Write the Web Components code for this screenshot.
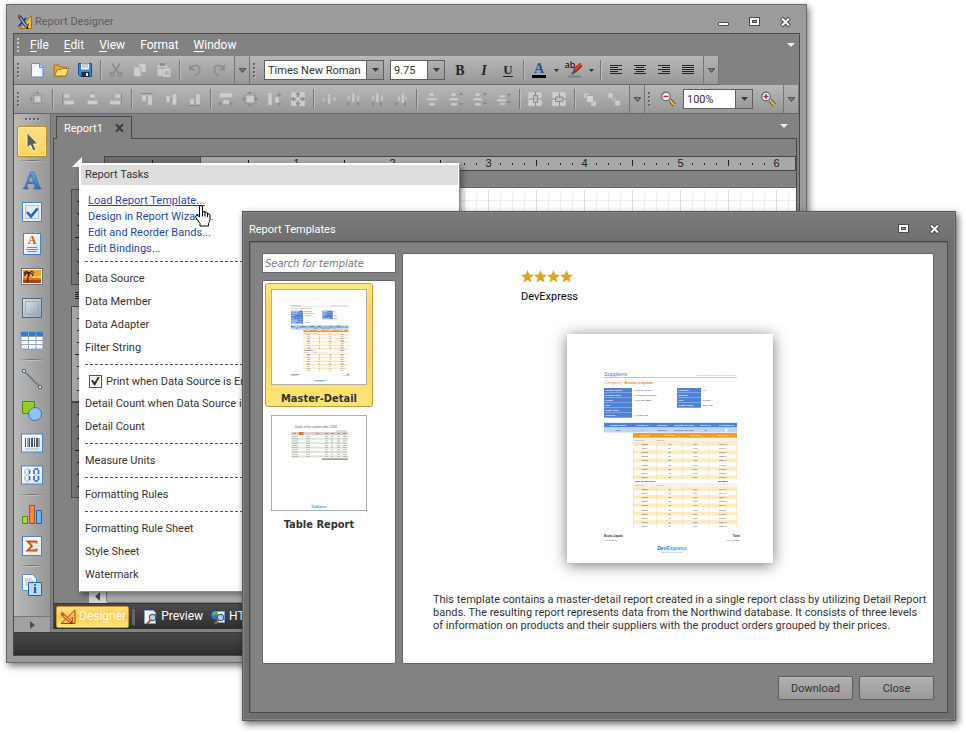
<!DOCTYPE html>
<html lang="en">
<head>
<meta charset="utf-8">
<title>Report Designer</title>
<style>
  html, body { margin: 0; height: 100%; background: #fff; overflow: hidden; }
  body { font-family: Roboto, "Noto Sans", sans-serif; font-size: 11px; line-height: 13px; color: #333; }
</style>
</head>
<body>
<desktop-view>
  <designer-window></designer-window>
  <templates-dialog></templates-dialog>
</desktop-view>

<script>
const define = (name, html, init) => {
  const t = document.createElement('template');
  t.innerHTML = `<style>*,*::before,*::after{box-sizing:border-box}button{font:inherit;color:inherit;background:none;border:0;padding:0;margin:0}</style>` + html;
  customElements.define(name, class extends HTMLElement {
    constructor() {
      super();
      this.attachShadow({ mode: 'open' }).append(t.content.cloneNode(true));
    }
    connectedCallback() { if (init && !this.ready) { this.ready = true; init(this, this.shadowRoot); } }
  });
};

/* ---------- icon library: 16x16 toolbar glyphs ---------- */
const lt = (...a) => a.map(([x, y, w, h]) => `<rect x="${x}" y="${y}" width="${w}" height="${h}" fill="#cdcdcd" stroke="#adadad" stroke-width=".5"/>`).join('');
const dk = (...a) => a.map(([x, y, w, h]) => `<rect x="${x}" y="${y}" width="${w}" height="${h}" fill="#8b8b8b"/>`).join('');
const line = (d, c = '#8b8b8b', w = 1) => `<path d="${d}" fill="none" stroke="${c}" stroke-width="${w}"/>`;
const fill = (d, c = '#8b8b8b') => `<path d="${d}" fill="${c}"/>`;
const aL = (x, y) => fill(`M${x} ${y}l3 -2.5v5z`), aR = (x, y) => fill(`M${x} ${y}l-3 -2.5v5z`);
const aU = (x, y) => fill(`M${x} ${y}l-2.5 3h5z`), aD = (x, y) => fill(`M${x} ${y}l-2.5 -3h5z`);
const bars = c => c.map(([x, w], i) => `<rect x="${x}" y="${3 + i * 2}" width="${w}" height="1" fill="#222"/>`).join('');
const lens = s => line('M10 9.500L14.500 14', '#6b5320', 4) + line('M10 9.500L14.500 14', '#e2b650', 2.2) +
  `<circle cx="6" cy="5.500" r="4.300" fill="#e9eef5" stroke="#5a6a7c" stroke-width="1.200"/>` + s;
const ICONS = {
  'new': `<path d="M2.500 1.500h8l3.500 3.500v10h-11.500z" fill="#edf4fd" stroke="#5b8fcb"/><path d="M4 8L10 3v11H4z" fill="#fff"/><path d="M10.500 1.500v4h3.500" fill="#bcd7f5" stroke="#5b8fcb"/>`,
  open: `<path d="M1 3h5l1.500 2h6v9H1z" fill="#e9a32f" stroke="#9a6513" stroke-width=".8"/><path d="M1.500 14L4.500 7.500h4l1-1h6L13 14z" fill="#ffdf70" stroke="#a56c12" stroke-width=".9"/>`,
  save: `<path d="M1.500 1.500h13v13h-11l-2-2z" fill="#3c84d8" stroke="#1d4c8d"/><path d="M4 1.500h8v6H4z" fill="#f4f6f9"/><path d="M5 3h6M5 5h6" stroke="#9aa"/><path d="M4.500 10h8v5h-8z" fill="#252b35"/><path d="M9 11h2v3H9z" fill="#eee"/>`,
  cut: line('M4 1.500L10.500 11M12 1.500L5.500 11', '#8d8d8d', 1.600) + `<g fill="none" stroke="#8d8d8d" stroke-width="1.500"><circle cx="4" cy="12.500" r="1.900"/><circle cx="12" cy="12.500" r="1.900"/></g>`,
  copy: lt([7, 1.500, 7, 9]) + lt([2, 5, 7, 9.500]) + line('M2 14.500h7v-9M14 10.500h-4', '#aaa'),
  paste: lt([1.500, 3, 10, 11]) + fill('M4 1h5v3H4z', '#909090') + line('M3 6h7', '#999') + lt([7, 6, 7.500, 9]) + line('M9 10h4M9 12h4', '#999'),
  undo: line('M4 5.500C8 2 13 3 12.500 8.500C12.300 11 10.500 13 8 14', '#909090', 2) + fill('M2 2v6.500h6.500z', '#909090'),
  redo: line('M12 5.500C8 2 3 3 3.500 8.500C3.700 11 5.500 13 8 14', '#909090', 2) + fill('M14 2v6.500h-6.500z', '#909090'),
  grid: line('M4.500 1v14M12.500 1v14M1 4.500h14M1 12.500h14', '#979797', .8) + lt([5.500, 5, 6, 6]) + aU(8.500, 0) + aL(0, 8),
  alL: dk([2, 2, 1, 12]) + lt([4, 3, 5.500, 4], [4, 9.500, 10, 4]),
  alC: dk([8, 1, 1, 14]) + lt([6, 3, 5, 4], [3.500, 9.500, 10, 4]),
  alR: dk([13, 2, 1, 12]) + lt([7, 3, 5.500, 4], [2, 9.500, 10.500, 4]),
  alT: dk([1, 2, 13, 1]) + lt([3, 4, 4, 6], [9, 4, 4, 10]),
  alM: dk([1, 8, 14, 1]) + lt([3, 5, 4, 6], [9.500, 3, 4, 11]),
  alB: dk([1, 14, 13, 1]) + lt([3, 8, 4, 5.500], [9, 3, 4, 10.500]),
  szW: lt([1.500, 2, 13, 4.500], [5, 9, 6, 4]) + aL(0, 13) + aR(15, 13),
  szG: line('M4.500 1v14M12.500 1v14M1 4.500h14M1 12.500h14', '#979797', .8) + lt([4.500, 4.500, 7.500, 7]) + aL(0, 8) + aR(16, 8) + aU(8, 0) + aD(8, 16),
  szH: lt([2, 2, 4, 12], [9, 6, 4, 6]) + aU(13, 2) + aD(13, 15),
  szB: lt([1, 1, 6, 6], [9, 1, 6, 6], [1, 9, 6, 6], [9, 9, 6, 6]) + line('M8 2v12M2 8h12') + lt([6, 6, 4, 4]) + aU(8, 1) + aD(8, 15) + aL(1, 8) + aR(15, 8),
  spE: lt([1.500, 7, 2, 3], [7, 3, 2.500, 10], [12.500, 6, 2, 4]),
  spI: lt([3, 5, 2, 4], [7, 2, 2.500, 9], [12, 4, 2, 6]) + aL(1, 13) + aR(15, 13),
  spD: lt([3, 5, 2, 4], [7, 2, 2.500, 9], [12, 4, 2, 6]) + aR(6, 13) + aL(10, 13),
  spR: lt([5, 5, 2, 5], [8.500, 2, 2.500, 10], [12, 5, 1.500, 5]) + aR(5, 13) + aL(10, 13),
  svE: lt([5, 2, 5, 3], [3, 7, 10, 2.500], [5, 12, 6, 2.500]),
  svI: lt([3, 2, 5, 3], [1, 7, 9, 2.500], [3, 12, 6, 2.500]) + aU(13, 1) + aD(13, 15),
  svD: lt([3, 2, 5, 3], [1, 7, 9, 2.500], [3, 12, 6, 2.500]) + aD(13, 5) + aU(13, 10),
  svR: lt([3, 4, 6, 2.500], [1, 8, 9, 2.500], [4, 12, 5, 2]) + aD(13, 6) + aU(13, 9),
  ceH: lt([1, 1, 14, 14]) + `<path d="M6.500 4.500h4v7h-4zM2 8h4M11 8h4M8.500 1v3M8.500 12v3" fill="#bdbdbd" stroke="#8b8b8b"/>`,
  ceV: lt([1, 1, 14, 14]) + `<path d="M4.500 6h7.500v4.500H4.500zM8.500 2v4M8.500 11v4M1 8h3M12 8h3" fill="#bdbdbd" stroke="#8b8b8b"/>`,
  fwd: lt([2, 2, 5, 5], [9, 10, 5, 5]) + `<rect x="4.500" y="4.500" width="7" height="7" fill="#d2d2d2" stroke="#999" stroke-width=".6"/>`,
  bck: `<rect x="5" y="5" width="6" height="6" fill="#b4b4b4" stroke="#999" stroke-width=".6"/>` + lt([2, 2, 5, 5], [9, 9.500, 5, 5]),
  bold: '<text x="8" y="13" text-anchor="middle" font-family="Liberation Serif, serif" font-weight="700" font-size="14" fill="#262626">B</text>',
  italic: '<text x="8" y="13" text-anchor="middle" font-family="Liberation Serif, serif" font-weight="700" font-style="italic" font-size="14" fill="#262626">I</text>',
  under: '<text x="8" y="12" text-anchor="middle" font-family="Liberation Serif, serif" font-weight="700" font-size="13" fill="#262626">U</text><path d="M3 14h10v1H3z" fill="#262626"/>',
  color: '<text x="8" y="11" text-anchor="middle" font-family="Liberation Serif, serif" font-weight="700" font-size="14" fill="#1f5599">A</text><path d="M1 13h14v3H1z" fill="#050505"/>',
  hilite: line('M15 2.500L8.500 9', '#8a1212', 4) + line('M15 2L8.500 8.500', '#e23a2e', 2.500) + fill('M8.500 7l2.500 2.500l-5 3.500l-1-1z', '#4a5564') + fill('M2 13.500h13v2H2z', '#7d7d7d') + `<text x="4" y="6" text-anchor="middle" font-family="Noto Sans, sans-serif" font-size="9" fill="#000">ab</text>`,
  jL: bars([[2, 12], [2, 8], [2, 12], [2, 8], [2, 12]]), jC: bars([[2, 12], [4, 8], [2, 12], [4, 8], [2, 12]]),
  jR: bars([[2, 12], [6, 8], [2, 12], [6, 8], [2, 12]]), jJ: bars([[2, 12], [2, 12], [2, 12], [2, 12], [2, 12]]),
  zoomOut: lens(line('M3.500 5.500h5', '#c22b2b', 1.500)),
  zoomIn: lens(line('M3.500 5.500h5M6 3v5', '#c22b2b', 1.500))
};

/* ---------- icon library: 24x24 toolbox glyphs ---------- */
const G = `<defs><linearGradient id="b" x2="0" y2="1"><stop stop-color="#7fb4f0"/><stop offset="1" stop-color="#1e62b8"/></linearGradient>
<linearGradient id="w" x2="1" y2="1"><stop stop-color="#fff"/><stop offset="1" stop-color="#dfe6ee"/></linearGradient>
<linearGradient id="s" x2="1" y2="1"><stop stop-color="#dde3ea"/><stop offset="1" stop-color="#97a4b3"/></linearGradient></defs>`;
const card = (w, h) => `<rect x="${12 - w / 2}" y="${12 - h / 2}" width="${w}" height="${h}" fill="url(#w)" stroke="#4584cb"/>`;
const digit = (x, on) => ['M.5 0h3.500', 'M0 .800v4.200', 'M4.500 .800v4.200', 'M.5 6h3.500', 'M0 7v4.200', 'M4.500 7v4.200', 'M.5 12h3.500']
  .map((d, i) => `<path transform="translate(${x} 6)" d="${d}" stroke="${on.includes(i) ? '#1c6fd0' : '#b9c2cc'}" stroke-width="1.600" fill="none"/>`).join('');
const BOX = {
  pointer: '<path d="M7 2.500v15.500l3.500-3 2.500 6 3-1.300-2.500-5.700h4.500z" fill="#565e69" stroke="#fff3b8" stroke-width="1"/>',
  label: '<text x="12" y="21" text-anchor="middle" font-family="Liberation Serif, serif" font-size="25" font-weight="700" fill="url(#b)" stroke="#1d58a4" stroke-width=".5">A</text>',
  check: card(19, 19) + '<rect x="5.500" y="5.500" width="13" height="13" fill="#e6ecf4" stroke="#b3c3d5"/><path d="M7 12l4 4.500 6.500-8" fill="none" stroke="#1d63bd" stroke-width="2.500"/>',
  rich: card(17, 21) + '<text x="12" y="12" text-anchor="middle" font-family="Liberation Serif, serif" font-size="12" font-weight="700" fill="#d65514">A</text><path d="M7 15.500h10M6 17.500h12M7.500 19.500h9" stroke="#7689a0"/>',
  picture: '<rect x="1.500" y="4.500" width="21" height="16" fill="#fff" stroke="#4c4c4c" stroke-width=".7"/><path d="M3 6h18v13H3z" fill="#f7a02a"/><path d="M3 15.500h18V19H3z" fill="#a8420e"/><path d="M3 14h18v1.500H3z" fill="#e2731a"/><path d="M13 12h8v2h-8z" fill="#ffdc58"/><path d="M7.500 18l1-9" stroke="#451705" stroke-width="1.200"/><path d="M9 9q-3-3-5 .500M9 9q-4-.500-4.500 3M9 9q3-3 5 0M9 9q4 0 4 3M9 9l0 3.500" stroke="#451705" stroke-width="1.200" fill="none"/>',
  panel: '<rect x="2.500" y="2.500" width="19" height="19" fill="url(#s)" stroke="#55677c"/><rect x="5.500" y="5.500" width="13" height="13" fill="url(#s)" stroke="#9aa8b8"/>',
  table: '<rect x="1" y="4" width="22" height="17" fill="#fff" stroke="#8496ab"/><path d="M1 4h22v4.500H1z" fill="#2f7cd6"/><path d="M1 8.500h22M1 12.500h22M1 16.500h22M8.500 4v17M16 4v17" stroke="#8fa3bb"/>',
  wire: '<path d="M4 4l16 16" stroke="#66727f" stroke-width="1.500"/><path d="M2.500 2.500h3v3h-3zM18.500 18.500h3v3h-3z" fill="#d8e4f0" stroke="#4c6580"/>',
  shape: '<path d="M2.500 2.500h12v12h-12z" fill="#93d01e" stroke="#4f8509"/><circle cx="15" cy="15" r="6.500" fill="#93c2f5" stroke="#3476c4"/>',
  barcode: card(21, 18) + '<path d="M5.500 7v9M8 7v9M9.500 7v9M14.500 7v9M19 7v9" stroke="#4c5866"/><path d="M12 7v9M17 7v9" stroke="#4c5866" stroke-width="2"/><path d="M5 18h14" stroke="#a8b4c2"/>',
  zip: card(21, 18) + digit(5, [2, 5]) + digit(14, [0, 1, 2, 4, 5, 6]),
  chart: '<path d="M2.500 14.500h5v7h-5z" fill="#a6dc3a" stroke="#4f8509"/><path d="M9.500 3.500h5v18h-5z" fill="#f48b3c" stroke="#b64b0b"/><path d="M16.500 8.500h5v13h-5z" fill="#6fb1f6" stroke="#1e62b8"/>',
  sum: card(19, 19) + '<path d="M16.500 9.500V7.500H7.500L12 12l-4.500 4.500h9v-2" fill="none" stroke="#d4500f" stroke-width="1.800"/>',
  info: '<path d="M2.500 1.500h10l4 4v12h-14z" fill="#fff" stroke="#5b8fcb"/><path d="M5 6h7M5 8h9M5 10h5M5 12h4" stroke="#9fb4cb"/><path d="M8.500 9.500h13v13h-13z" fill="#b9dafb" stroke="#1f63b2"/><text x="15" y="20" text-anchor="middle" font-family="Liberation Serif, serif" font-weight="700" font-size="12" fill="#12468c">i</text>'
};

define('desktop-view', `<style>:host{display:block;position:relative;height:100vh;min-height:400px;overflow:hidden}</style><slot></slot>`);

/* ---------- toolbars ---------- */
define('tool-icon', `<style>
:host{display:block;width:24px;height:24px}
button{width:24px;height:24px;display:grid;place-items:center}
svg{overflow:visible}
</style><button type="button"></button>`, (el, r) => {
  const n = el.getAttribute('name'), b = r.querySelector('button');
  b.setAttribute('aria-label', n);
  if (el.hasAttribute('off')) b.disabled = true;
  b.innerHTML = `<svg width="16" height="16" viewBox="0 0 16 16">${ICONS[n]}</svg>`;
});
define('tool-sep', `<style>:host{display:flex;width:7px;height:20px;justify-content:center}i{width:2px;border-left:1px solid #767676;border-right:1px solid #bdbdbd}</style><i></i>`);
define('tool-arrow', `<style>:host{display:block;width:11px}button{width:11px;height:24px;display:grid;place-items:center}</style><button type="button" aria-label="More"><svg width="5" height="3"><path d="M0 0h5L2.500 3z" fill="#333"/></svg></button>`);
define('tool-end', `<style>
:host{display:block;align-self:stretch;width:16px;margin-left:3px;border-left:1px solid #767676;border-right:1px solid #767676;background:linear-gradient(#b3b3b3,#999)}
button{width:100%;height:100%;display:grid;place-items:center}
</style><button type="button" aria-label="Toolbar options"><svg width="7" height="5"><path d="M0 0h7v1L3.500 5L0 1z" fill="#555"/><path d="M1.500 1h4L3.500 3.300z" fill="#888"/></svg></button>`);
define('tool-bar', `<style>
:host{display:flex;align-items:center;height:29px;background:linear-gradient(#b8b8b8,#979797);border-bottom:1px solid #686868}
.grip{width:11px;display:grid;gap:2px;padding-left:3px}
.grip i{width:2px;height:2px;background:#666;box-shadow:1px 1px #bbb}
</style><span class="grip"><i></i><i></i><i></i><i></i></span><slot></slot>`);
define('tool-combo', `<style>
:host{display:grid;height:20px;margin-right:6px}
select,span{grid-area:1/1}
select{appearance:none;width:100%;border:1px solid #5f5f5f;border-radius:0;background:#fff;color:#333;font:inherit;padding:0 20px 0 3px;outline:0}
span{justify-self:end;width:17px;margin:1px;border-left:1px solid #5f5f5f;background:linear-gradient(#b0b0b0,#9a9a9a);display:grid;place-items:center;pointer-events:none}
</style><select></select><span><svg width="7" height="4"><path d="M0 0h7L3.500 4z" fill="#3c3c3c"/></svg></span>`, (el, r) => {
  const s = r.querySelector('select');
  s.setAttribute('aria-label', el.getAttribute('label'));
  s.append(new Option(el.getAttribute('value')));
});

/* ---------- toolbox ---------- */
define('tool-box', `<style>
:host{display:flex;flex-direction:column;align-items:center;width:37px;background:linear-gradient(90deg,#bababa,#969696);border-right:1px solid #6e6e6e}
.grip{display:flex;gap:2px;margin:4px 0 6px}
.grip i{width:2px;height:2px;background:#666;box-shadow:1px 1px #bbb}
button{width:30px;height:32px;display:grid;place-items:center;flex:none}
button.on{height:31px;background:linear-gradient(#ffdf80,#ffd45e);border:1px solid #b98d2c;border-radius:2px;box-shadow:inset 0 0 0 1px #ffe9a5}
svg{overflow:visible}
hr{width:26px;height:7px;margin:0;border:0;flex:none;background:linear-gradient(90deg,#0000,#6b6b6b,#0000) 0 3px/100% 1px no-repeat,linear-gradient(90deg,#0000,#c5c5c5,#0000) 0 4px/100% 1px no-repeat}
button.more{margin-top:auto;width:100%;height:16px;border-top:1px solid #777;background:#a2a2a2}
</style><span class="grip"><i></i><i></i><i></i><i></i></span>`, (el, r) => {
  'pointer - label check rich picture panel table - wire shape barcode zip - chart sum - info'.split(' ').forEach(n => {
    if (n === '-') return r.append(document.createElement('hr'));
    const b = document.createElement('button');
    b.type = 'button'; b.setAttribute('aria-label', n);
    if (n === 'pointer') b.className = 'on';
    b.innerHTML = `<svg width="24" height="24" viewBox="0 0 24 24">${G}${BOX[n]}</svg>`;
    r.append(b);
  });
  r.append(Object.assign(document.createElement('button'), { className: 'more', type: 'button', ariaLabel: 'More tools',
    innerHTML: '<svg width="5" height="8"><path d="M0 0l5 4l-5 4z" fill="#505050"/></svg>' }));
});

/* ---------- rulers ---------- */
define('horizontal-ruler', `<style>
:host{display:block;min-width:0;height:15px;border:1px solid #484848;background:linear-gradient(90deg,#6d6d6d 95px,#484848 95px,#484848 96px,#a8a8a8 96px);overflow:hidden}
svg{display:block;width:100%;height:13px;overflow:hidden}
text{font:11px "Liberation Sans",Arial,sans-serif;fill:#222}
</style><svg></svg>`, (el, r) => {
  const draw = () => {
    let s = '';
    for (let i = 1; i * 12 + 6 < el.clientWidth; i++) {
      const x = i * 12 - 1;
      if (i % 8 === 0) { const n = Math.abs(i / 8 - 1); if (n) s += `<text x="${x + .5}" y="10" text-anchor="middle">${n}</text>`; }
      else s += i % 4 === 0 ? `<rect x="${x}" y="3" width="1" height="6" fill="#222"/>` : `<rect x="${x}" y="6" width="1" height="2" fill="#222"/>`;
    }
    r.querySelector('svg').innerHTML = s;
  };
  new ResizeObserver(draw).observe(el);
});
define('vertical-ruler', `<style>
:host{display:block}
div{width:15px;height:96px;border:1px solid #484848;background:#757575}
div.lit{background:#a6a6a6}
p{margin:7px 0 6px 4px;width:8px;height:8px;background:repeating-linear-gradient(#222 0 1px,#0000 1px 2px)}
i{display:block;width:2px;height:1px;margin:11px 0 0 5px;background:#222}
i.half{width:4px;margin-left:3px}
</style><div></div><p></p><div class="lit"></div><div></div>`, (el, r) => {
  r.querySelectorAll('div').forEach(d => { for (let i = 1; i < 8; i++) { const t = document.createElement('i'); if (i === 4) t.className = 'half'; d.append(t); } });
});

/* ---------- smart-tag task panel ---------- */
define('task-panel', `<style>
:host{display:block;background:#fff;border:1px solid #8c8c8c;border-top-color:#fff;border-left-color:#fff;padding:1px 1px 0;box-shadow:2px 3px 6px #0007}
h2{margin:0;font:inherit;background:#dedede;height:20px;line-height:20px;padding-left:4px;color:#333}
nav{padding:8px 7px 4px}
nav a{display:block;line-height:16px;color:#1d49a5;text-decoration:none;width:max-content}
nav a.hot{text-decoration:underline}
hr{border:0;height:1px;margin:0 4px 5px;background:repeating-linear-gradient(90deg,#555 0 3px,#0000 3px 5px)}
button{display:block;text-align:left;height:23px;padding-left:4px;white-space:nowrap}
section{padding-bottom:5px}
label{display:flex;align-items:center;gap:4px;height:22px;padding-left:8px;white-space:nowrap}
input{appearance:none;width:13px;height:13px;margin:0;border:1px solid #555;background:#efefef;box-shadow:inset 0 0 0 1px #fff;display:grid;place-items:center}
input:checked::before{content:"";width:9px;height:9px;background:#333;clip-path:polygon(0 45%,20% 38%,40% 65%,78% 0,100% 0,45% 100%,35% 100%)}
</style>
<h2>Report Tasks</h2>
<nav><a class="hot" href="#load">Load Report Template...</a><a href="#wizard">Design in Report Wizard...</a><a href="#bands">Edit and Reorder Bands...</a><a href="#bindings">Edit Bindings...</a></nav>
<hr><section><button>Data Source</button><button>Data Member</button><button>Data Adapter</button><button>Filter String</button></section>
<hr><section><label><input type="checkbox" checked>Print when Data Source is Empty</label><button>Detail Count when Data Source is Empty</button><button>Detail Count</button></section>
<hr><section><button>Measure Units</button></section>
<hr><section><button>Formatting Rules</button></section>
<hr><section><button>Formatting Rule Sheet</button><button>Style Sheet</button><button>Watermark</button></section>`);

/* ---------- window caption buttons ---------- */
define('caption-buttons', `<style>
:host{display:flex;gap:19px}
button{width:12px;height:12px;display:block}
svg{display:block}
</style>`, (el, r) => {
  const k = {
    min: '<rect x=".5" y="6.500" width="10" height="3" rx=".5" fill="#fff" stroke="#4b4b4b"/>',
    max: '<rect x=".5" y="1.500" width="10" height="8" fill="#fff" stroke="#4b4b4b"/><rect x="3.500" y="4.500" width="4" height="2" fill="#999" stroke="#4b4b4b"/>',
    close: '<path d="M1.500 2l8 8M9.500 2l-8 8" stroke="#4b4b4b" stroke-width="4"/><path d="M2 2.500l7 7M9 2.500l-7 7" stroke="#fff" stroke-width="2"/>'
  };
  el.getAttribute('show').split(' ').forEach(n => r.append(Object.assign(document.createElement('button'), { type: 'button', ariaLabel: n, innerHTML: `<svg width="12" height="12">${k[n]}</svg>` })));
});

/* ---------- bottom view tabs ---------- */
define('view-tab', `<style>
:host{display:block}
button{display:flex;align-items:center;gap:3px;height:22px;padding:0 2px 0 3px;color:#fff;font-size:12px;white-space:nowrap;border:1px solid #0000;border-radius:2px}
:host([on]) button{background:linear-gradient(#ffe07c,#ffcb55 50%,#ffe777);border-color:#c7952f;color:#fffbe8}
</style><button type="button"><svg width="16" height="16" viewBox="0 0 16 16"></svg><slot></slot></button>`, (el, r) => {
  const mag = '<circle cx="10.500" cy="8.500" r="3.200" fill="#b5d2ef" stroke="#3d5f86" stroke-width="1.200"/><path d="M8.500 11l-3.500 4" stroke="#b0612a" stroke-width="2.200"/>';
  const art = {
    design: '<path d="M1 14.500h14V1z" fill="#ffbf4d" stroke="#a44d08"/><path d="M8.500 12h4V8z" fill="#ffe07c" stroke="#a44d08" stroke-width=".8"/><path d="M2 5l10 9" stroke="#7a1e10" stroke-width="3"/><path d="M2 5l9 8" stroke="#ff9c52" stroke-width="1.800"/><path d="M1.500 3.500l2.500 3" stroke="#d64a6a" stroke-width="2.500"/>',
    preview: '<path d="M2.500 1.500h9l2 2v11h-11z" fill="#fff" stroke="#7ea4cf"/>' + mag,
    html: '<circle cx="5.500" cy="6" r="4.800" fill="#2d74c6" stroke="#194a88"/><path d="M3 3q3-2 4 0t-2 3q-2 2-3-1z" fill="#5fb53c"/><path d="M7.500 2.500h7v11h-7z" fill="#fff" stroke="#7ea4cf"/>' + mag
  };
  r.querySelector('svg').innerHTML = art[el.getAttribute('icon')];
});

/* ---------- main designer window ---------- */
define('designer-window', `<style>
:host{position:absolute;inset:4px 159px 70px 6px;display:flex;flex-direction:column;border:1px solid #6a6a6a;background:#9c9c9c;padding:0 6px 6px;box-shadow:2px 3px 7px #0008}
header{display:flex;align-items:center;height:28px;padding:5px 8px 0 4px;color:#5c5c5c}
header h1{font:inherit;margin:0 auto 0 2px}
.client{flex:1;min-height:0;display:flex;flex-direction:column;border:1px solid #4a4a4a;background:#828282}
.menu{display:flex;align-items:center;height:22px;color:#fff;font-size:12px;padding-right:4px}
.menu .grip{width:9px;display:grid;gap:2px;padding-left:3px}
.menu .grip i{width:2px;height:2px;background:#ccc}
.menu nav{display:flex;gap:15px;margin:0 auto 0 7px}
u{text-underline-offset:2px}
.row{display:flex}
.row .zoom{flex:1}
.body{flex:1;min-height:0;display:flex;gap:2px}
.doc{flex:1;min-width:0;display:flex;flex-direction:column;padding:2px 2px 3px 0}
.tabs{display:flex;align-items:flex-end;height:22px;padding:0 9px 0 3px;justify-content:space-between}
.tab{display:flex;align-items:center;gap:12px;width:76px;height:23px;border:1px solid #484848;border-bottom:0;background:#828282;margin-bottom:-1px;padding-left:7px;z-index:1;color:#fff}
.tabs>svg{margin-bottom:10px}
.surface{position:relative;flex:1;min-height:0;display:flex;flex-direction:column;border:1px solid #484848;border-bottom:0}
.design{flex:1;min-height:0;display:grid;grid-template:15px 1fr/33px 1fr;row-gap:17px;padding:17px 0 0 17px;overflow:hidden}
.corner{display:block}
.page{background:
 linear-gradient(90deg,#dcdcdc 1px,#0000 1px) 0 0/48px 48px,
 linear-gradient(90deg,#efefef 1px,#0000 1px) 0 0/12px 12px,
 linear-gradient(#efefef 1px,#0000 1px) 0 0/12px 12px,#fff;box-shadow:0 -1px #666,inset 0 2px #fff}
vertical-ruler{margin-top:1px}
.scroll{display:flex;height:12px;margin-left:35px;background:#d4d4d4}
.scroll svg{margin:1px 6px 0 6px}
.scroll i{flex:1;border:1px solid #808080;background:linear-gradient(#c4c4c4,#a6a6a6);border-radius:2px}
.views{display:flex;align-items:center;height:26px;background:linear-gradient(#4b4b4b,#2e2e2e);border-top:1px solid #333;padding-left:2px}
.views .bar{width:3px;height:16px;margin:0 3px;background:#666}
task-panel{position:absolute;left:25px;top:24px;width:381px;z-index:2}
footer{height:23px;background:linear-gradient(#494949,#2e2e2e);border-top:1px solid #3b3b3b}
</style>
<header><svg width="16" height="16" viewBox="0 0 16 16"><path d="M3 14.500L14.500 1.500v13z" fill="#ffc31f" stroke="#a4650a" stroke-width=".9"/><path d="M9 11.800L12 8.500v3.300z" fill="#b0781e"/><path d="M9 4L1.500 12.500" stroke="#27313f" stroke-width="1.400"/><path d="M2.500 2.500l7 10" stroke="#12306e" stroke-width="3.600"/><path d="M3 3.500l6.500 9" stroke="#7db2ff" stroke-width="1.600"/><path d="M1.500 1l2 2.500" stroke="#c03020" stroke-width="2.400"/><path d="M8.500 13.500l2.500-1.500.3 3.500z" fill="#111"/></svg><h1>Report Designer</h1><caption-buttons show="min max close"></caption-buttons></header>
<div class="client">
  <div class="menu"><span class="grip"><i></i><i></i><i></i><i></i></span><nav><button><u>F</u>ile</button><button><u>E</u>dit</button><button><u>V</u>iew</button><button>Fo<u>r</u>mat</button><button><u>W</u>indow</button></nav><svg width="8" height="4"><path d="M0 0h8L4 4z" fill="#eee"/></svg></div>
  <div class="row">
    <tool-bar><tool-icon name="new"></tool-icon><tool-icon name="open"></tool-icon><tool-icon name="save"></tool-icon><tool-sep></tool-sep><tool-icon name="cut" off></tool-icon><tool-icon name="copy" off></tool-icon><tool-icon name="paste" off></tool-icon><tool-sep></tool-sep><tool-icon name="undo" off></tool-icon><tool-icon name="redo" off></tool-icon><tool-end></tool-end></tool-bar>
    <tool-bar><tool-combo style="width:120px;margin-left:3px" label="Font" value="Times New Roman"></tool-combo><tool-combo style="width:55px;margin-right:3px" label="Font size" value="9.75"></tool-combo><tool-icon name="bold"></tool-icon><tool-icon name="italic"></tool-icon><tool-icon name="under"></tool-icon><tool-sep></tool-sep><tool-icon name="color"></tool-icon><tool-arrow></tool-arrow><tool-icon name="hilite"></tool-icon><tool-arrow></tool-arrow><tool-sep></tool-sep><tool-icon name="jL"></tool-icon><tool-icon name="jC"></tool-icon><tool-icon name="jR"></tool-icon><tool-icon name="jJ"></tool-icon><tool-end></tool-end></tool-bar>
  </div>
  <div class="row">
    <tool-bar class="layout"></tool-bar>
    <tool-bar class="zoom"><tool-icon name="zoomOut"></tool-icon><tool-combo style="width:70px;margin:0 3px" label="Zoom" value="100%"></tool-combo><tool-icon name="zoomIn"></tool-icon><tool-end style="margin-left:auto"></tool-end></tool-bar>
  </div>
  <div class="body">
    <tool-box></tool-box>
    <div class="doc">
      <div class="tabs"><div class="tab"><span>Report1</span><svg width="9" height="8"><path d="M1 0l7 8M8 0L1 8" stroke="#3c3c3c" stroke-width="2"/></svg></div><svg width="8" height="4"><path d="M0 0h8L4 4z" fill="#eee"/></svg></div>
      <div class="surface">
        <div class="design"><svg class="corner" width="12" height="12"><path d="M1 11L11 1v10z" fill="#fff"/></svg><horizontal-ruler></horizontal-ruler><vertical-ruler></vertical-ruler><div class="page"></div></div>
        <div class="scroll"><svg width="5" height="9"><path d="M5 0v9L0 4.500z" fill="#4a4a4a"/></svg><i></i></div>
        <div class="views"><view-tab on icon="design">Designer</view-tab><span class="bar"></span><view-tab icon="preview">Preview</view-tab><view-tab icon="html">HTML View</view-tab></div>
        <task-panel></task-panel>
      </div>
    </div>
  </div>
  <footer></footer>
</div>`, (el, r) => {
  r.querySelector('.layout').innerHTML = 'grid - alL alC alR - alT alM alB - szW szG szH szB - spE spI spD spR - svE svI svD svR - ceH ceV - fwd bck'.split(' ')
    .map(n => n === '-' ? '<tool-sep></tool-sep>' : `<tool-icon name="${n}" off></tool-icon>`).join('') + '<tool-end></tool-end>';
});

/* ---------- report page drawings ---------- */
define('report-page', `<style>
:host{display:block;background:#fff}
svg{display:block;width:100%;height:100%}
text{font-family:"Liberation Sans",Arial,sans-serif}
</style>`, (el, r) => {
  const R = (x, y, w, h, c) => `<rect x="${x}" y="${y}" width="${w}" height="${h}" fill="${c}"/>`;
  const T = (x, y, s, c, t, a = 'start', b = 400) => t === '' ? '' : `<text x="${x}" y="${y}" font-size="${s}" fill="${c}" text-anchor="${a}" font-weight="${b}">${t}</text>`;
  let s = '';
  if (el.getAttribute('kind') === 'orders') {
    s += T(44, 12, 2.6, '#555', 'Details of the customer order: 10248', 'middle');
    s += R(19, 16, 57, 3.5, '#dccfc9') + R(27, 16, 4.500, 3, '#d87a2a') + R(64, 14.5, 11, 1, '#a9bbe0');
    for (let i = 0; i < 10; i++) {
      s += R(19, 19.5 + i * 2.2, 57, 2.2, i % 2 ? '#dfe7da' : '#fbfcfa');
      [[20, 6], [34, 4], [53, 3], [59, 2], [65, 3], [71, 4]].forEach(([x, w]) => s += R(x, 20.2 + i * 2.2, w, .7, '#a5aba2'));
    }
    [22, 45, 54, 60, 66, 72].forEach(x => s += R(x - 1, 17.3, 3, .8, '#888'));
    s += R(50, 42.5, 26, 1.2, '#777') + T(47, 91.500, 2.6, '#1d9ad6', 'DevExpress', 'middle', 700);
    r.innerHTML += `<svg viewBox="0 0 94 94">${s}</svg>`;
    return;
  }
  s += T(37, 42, 5.5, '#4c79c8', 'Suppliers') + R(37, 43.2, 133, .7, '#8fb0e6') + T(169, 42, 2.2, '#7f9fd8', 'Current Date: Tuesday, 27 of March 2012', 'end');
  s += T(37, 50, 4.2, '#f2902f', 'Company') + T(57.500, 50, 4.2, '#ef7d12', 'Exotic Liquids', 'start', 700);
  ['Contact Name:', 'Contact Title:', 'Phone:', 'Fax:', 'Home Page:', 'Address:'].forEach((t, i) => s += R(37, 54 + i * 5, 28, 4.7, '#4f81d6') + T(38, 57.2 + i * 5, 2.5, '#fff', t, 'start', 700));
  ['Charlotte Cooper', 'Purchasing Manager', '(171) 555-2222', '', '', '49 Gilbert St.'].forEach((t, i) => s += T(67.500, 57.2 + i * 5, 2.4, '#444', t));
  ['Country:', 'Region:', 'City:', 'Postal Code:'].forEach((t, i) => s += R(110, 54 + i * 5, 24, 4.7, '#4f81d6') + T(111.500, 57.2 + i * 5, 2.5, '#fff', t, 'start', 700));
  ['UK', '', 'London', 'EC1 4SD'].forEach((t, i) => s += T(136, 57.2 + i * 5, 2.4, '#444', t));
  s += R(37, 88.8, 133, 4.7, '#4f81d6') + R(37, 93.5, 133, 5, '#bcd6fa') + R(66, 99, 104, 4.700, '#f59c1d');
  [[51, 'Product Name', 'Chai'], [75.500, 'Product ID', '1'], [95, 'Category', 'Category'], [117, 'Quantity per Unit', '10 boxes x 20 bags'], [138.500, 'Unit Price', '18'], [159.500, 'Discontinued', '']]
    .forEach(([x, a, b]) => s += T(x, 92.1, 2.4, '#fff', a, 'middle', 700) + T(x, 97, 2.3, '#444', b, 'middle'));
  s += R(158, 94.7, 2.600, 2.600, '#fff');
  const C = [77.500, 102.500, 128, 156];
  ['Order ID', 'Quantity', 'Discount', 'Sub Total'].forEach((t, i) => s += T(C[i], 102.2, 2.5, '#fff', t, 'middle', 700));
  const block = (y, n) => {
    s += R(66, y, 104, 4, '#f2f2f2') + T(67.500, y + 2.9, 2.3, '#888', 'Unit price') + T(90, y + 2.9, 2.3, '#888', '$18.00');
    for (let i = 0; i < n; i++) {
      const q = y + 4 + i * 4.1;
      s += R(66, q, 104, 4.1, i % 2 ? '#fff' : '#ffebc2');
      [10285 + i * 9, [45, 18, 20, 15, 12, 10, 24][i % 7], ['0.20', '0.00'][i % 2], '$' + (648 - i * 31) + '.0'].forEach((t, j) => s += T(C[j], q + 3, 2.4, '#444', t, 'middle'));
    }
    [66, 89, 115.500, 141, 169.700].forEach(x => s += R(x, y + 4, .3, n * 4.1, '#f6c574'));
  };
  block(104, 9);
  s += T(67.500, 148, 2.4, '#222', 'Total for unit price:', 'start', 700) + T(156, 148, 2.4, '#222', '$2,959.2', 'middle', 700);
  block(149, 10);
  s += T(37, 203, 2.8, '#222', 'Exotic Liquids', 'start', 700) + T(37, 206.500, 2.4, '#555', '1 of 2 pages') + T(172.500, 203, 2.8, '#222', 'Total', 'end', 700) + T(172.500, 206.500, 2.4, '#555', '1 of 2 pages', 'end');
  s += T(105, 216, 5.2, '#1ba0e0', '<tspan fill="#0b76ba">Dev</tspan>Express', 'middle', 700) + T(105, 219, 2.2, '#1ba0e0', 'www.devexpress.com', 'middle');
  r.innerHTML += `<svg viewBox="${el.getAttribute('view') || '0 0 206 229'}">${s}</svg>`;
});

define('template-card', `<style>
:host{display:block}
button{display:flex;flex-direction:column;align-items:center;gap:7px;width:100%;height:124px;padding:5px 0 0;font:700 11px/14px "DejaVu Sans Condensed","Noto Sans",sans-serif;color:#333;border:1px solid #0000;border-radius:3px}
:host([on]) button{background:linear-gradient(#ffe680,#ffd767 20%,#ffd767 60%,#ffe676);border-color:#c79a35}
span{display:block;width:96px;height:96px;border:1px solid #b0b0b0;background:#fff}
::slotted(report-page){height:100%}
</style><button type="button"><span><slot name="pic"></slot></span><slot></slot></button>`);

define('star-rating', `<style>:host{display:flex}svg{display:block}</style>`, (el, r) => {
  for (let i = 0; i < +el.getAttribute('value'); i++)
    r.innerHTML += '<svg width="13" height="13" viewBox="0 0 13 13"><path d="M6.500 0L8.300 4.600 13 4.900 9.300 7.900 10.600 12.600 6.500 10 2.400 12.600 3.700 7.900 0 4.900 4.700 4.600z" fill="#daa520"/></svg>';
});

define('templates-dialog', `<style>
:host{position:absolute;inset:211px 10px 12px 242px;display:flex;flex-direction:column;border:1px solid #585858;background:linear-gradient(#7b7b7b,#6f6f6f 30px);padding:0 7px 7px 6px;box-shadow:2px 3px 7px #0009,inset 0 0 0 1px #858585;z-index:3}
header{display:flex;align-items:center;height:29px;padding:5px 7px 0 0;color:#fff;justify-content:space-between}
h1{font:inherit;margin:0}
.client{flex:1;min-height:0;display:grid;grid-template:1fr 24px/134px 1fr;gap:12px 6px;border:1px solid #4a4a4a;box-shadow:inset 1px 1px #6b6b6b;background:#828282;padding:11px 13px 12px 12px}
.left{display:flex;flex-direction:column;gap:7px;min-height:0}
input{height:20px;width:100%;border:1px solid #666;background:#fff;padding:0 2px;font:italic 11px "DejaVu Sans Condensed","Noto Sans",sans-serif;color:#333;outline:0}
input::placeholder{color:#777;opacity:1}
.list,.detail{flex:1;min-height:0;background:#fff;border:1px solid #666;border-radius:2px;overflow:hidden}
.list{padding:2px;display:grid;grid-template-columns:108px;align-content:start;gap:2px}
.detail{display:flex;flex-direction:column;padding:16px 2px 0 30px}
.who{display:grid;gap:7px;margin-left:88px;color:#000}
.big{width:206px;height:229px;margin:31px 0 0 134px;box-shadow:0 2px 14px #0008;flex:none}
p{margin:30px 0 0;color:#333;max-width:496px}
footer{grid-column:1/3;display:flex;justify-content:flex-end;gap:6px}
footer button{width:75px;border:1px solid #5c5c5c;border-radius:2px;background:linear-gradient(#b0b0b0,#9a9a9a);color:#333;box-shadow:inset 0 1px #bdbdbd}
</style>
<header><h1>Report Templates</h1><caption-buttons show="max close"></caption-buttons></header>
<div class="client">
  <div class="left"><input type="text" placeholder="Search for template" aria-label="Search for template">
    <div class="list"><template-card on><report-page slot="pic" view="-7 6 218 218"></report-page>Master-Detail</template-card><template-card><report-page slot="pic" kind="orders"></report-page>Table Report</template-card></div></div>
  <div class="detail"><div class="who"><star-rating value="4"></star-rating><span>DevExpress</span></div><report-page class="big"></report-page>
    <p>This template contains a master-detail report created in a single report class by utilizing Detail Report bands. The resulting report represents data from the Northwind database. It consists of three levels of information on products and their suppliers with the product orders grouped by their prices.</p></div>
  <footer><button type="button">Download</button><button type="button">Close</button></footer>
</div>`);

/* hand pointer shown over the hovered task link */
define('hand-pointer', `<style>:host{position:absolute;left:195px;top:205px;z-index:2;pointer-events:none}svg{display:block}</style>
<svg width="16" height="22" viewBox="0 0 16 22"><path d="M4.500 12V2q0-1.500 1.500-1.500T7.500 2v6q0-1.500 1.500-1.500T10 8q.3-1.300 1.500-1T12.500 9q2.300-.800 2.500 1v4.500q0 2-1.500 4v2.500H5v-2.500Q3 16 .8 12.500q-.5-1.500.8-2T4.500 12z" fill="#fff" stroke="#000"/><path d="M7.500 8v3.500M10 8v3.500M12.500 9v3" stroke="#000"/></svg>`);
document.querySelector('desktop-view').insertBefore(document.createElement('hand-pointer'), document.querySelector('templates-dialog'));
</script>
</body>
</html>
